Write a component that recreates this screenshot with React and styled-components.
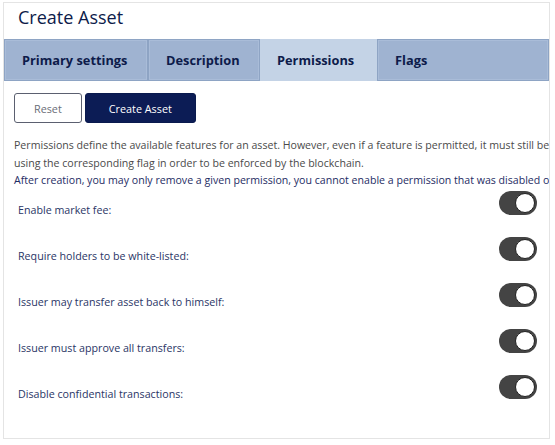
import React, { useState } from "react";
import styled, { createGlobalStyle } from "styled-components";

const GlobalStyle = createGlobalStyle`
  html, body {
    margin: 0;
    padding: 0;
    background: #fff;
  }
  body {
    font-family: "Open Sans", "Noto Sans", sans-serif;
  }
`;

const Page = styled.div`
  padding: 2px 4px 0 3px;
`;

const Card = styled.div`
  width: 547px;
  height: 437px;
  border: 1px solid #e4e4e4;
  box-sizing: border-box;
  overflow: hidden;
  background: #fff;
`;

const Title = styled.h1`
  margin: 0;
  height: 36px;
  padding-left: 14px;
  font-size: 18px;
  font-weight: 400;
  line-height: 29px;
  color: #0d1b4a;
`;

const TabBar = styled.div`
  display: flex;
  height: 42px;
  background: #9fb3d1;
`;

const Tab = styled.div`
  display: flex;
  align-items: center;
  padding: 0 17px;
  width: ${(p) => (p.$grow ? "auto" : p.$w + "px")};
  flex: ${(p) => (p.$grow ? 1 : "none")};
  box-sizing: border-box;
  white-space: nowrap;
  font-size: 12.8px;
  font-weight: 700;
  color: #0d1b4a;
  background: ${(p) => (p.$active ? "#c4d3e6" : "#9fb3d1")};
  border: ${(p) => (p.$active ? "none" : "1px solid #8ea4c4")};
  box-shadow: ${(p) => (p.$active ? "none" : "inset 0 0 0 1px #a9bcd8")};
`;

const Content = styled.div`
  padding: 12px 0 0 10px;
`;

const Buttons = styled.div`
  display: flex;
  gap: 3px;
  margin-bottom: 14px;
`;

const Button = styled.button`
  height: 30px;
  padding: 0 ${(p) => (p.$primary ? 23 : 19)}px;
  border-radius: 3px;
  font-family: inherit;
  font-size: 10.8px;
  cursor: pointer;
  border: 1px solid ${(p) => (p.$primary ? "#0a1a4e" : "#5b6070")};
  background: ${(p) => (p.$primary ? "#0c1c55" : "#fff")};
  color: ${(p) => (p.$primary ? "#fff" : "#6a6e78")};
`;

const Info = styled.p`
  margin: 0;
  font-size: 10.6px;
  line-height: 17.5px;
  white-space: nowrap;
  color: ${(p) => (p.$accent ? "#1e2c64" : "#4a4a4a")};
`;

const Rows = styled.div`
  margin-top: 1px;
  padding-right: 12px;
`;

const Row = styled.div`
  display: flex;
  align-items: flex-start;
  justify-content: space-between;
  height: 46px;
`;

const Label = styled.span`
  margin-left: 4px;
  padding-top: 12px;
  font-size: 10.7px;
  color: #2a3566;
`;

const Switch = styled.button`
  position: relative;
  width: 38px;
  height: 24px;
  padding: 0;
  border: none;
  border-radius: 12px;
  background: ${(p) => (p.$on ? "#444" : "#ccc")};
  cursor: pointer;

  &::after {
    content: "";
    position: absolute;
    top: 2px;
    left: ${(p) => (p.$on ? "16px" : "2px")};
    width: 18px;
    height: 18px;
    border-radius: 50%;
    background: #fff;
    border: 1px solid #222;
    box-sizing: content-box;
  }
`;

const permissions = [
  "Enable market fee:",
  "Require holders to be white-listed:",
  "Issuer may transfer asset back to himself:",
  "Issuer must approve all transfers:",
  "Disable confidential transactions:",
];

const tabs = [
  { name: "Primary settings", w: 144 },
  { name: "Description", w: 112 },
  { name: "Permissions", w: 117, active: true },
  { name: "Flags", grow: true },
];

export default function App() {
  const [flags, setFlags] = useState(permissions.map(() => true));

  return (
    <Page>
      <GlobalStyle />
      <Card>
        <Title>Create Asset</Title>
        <TabBar>
          {tabs.map((t) => (
            <Tab key={t.name} $w={t.w} $grow={t.grow} $active={t.active}>
              {t.name}
            </Tab>
          ))}
        </TabBar>
        <Content>
          <Buttons>
            <Button>Reset</Button>
            <Button $primary>Create Asset</Button>
          </Buttons>
          <Info>
            Permissions define the available features for an asset. However, even if a feature is permitted, it must still be
          </Info>
          <Info>using the corresponding flag in order to be enforced by the blockchain.</Info>
          <Info $accent>
            After creation, you may only remove a given permission, you cannot enable a permission that was disabled or
          </Info>
          <Rows>
            {permissions.map((p, i) => (
              <Row key={p}>
                <Label>{p}</Label>
                <Switch
                  $on={flags[i]}
                  onClick={() => setFlags(flags.map((f, j) => (j === i ? !f : f)))}
                />
              </Row>
            ))}
          </Rows>
        </Content>
      </Card>
    </Page>
  );
}
